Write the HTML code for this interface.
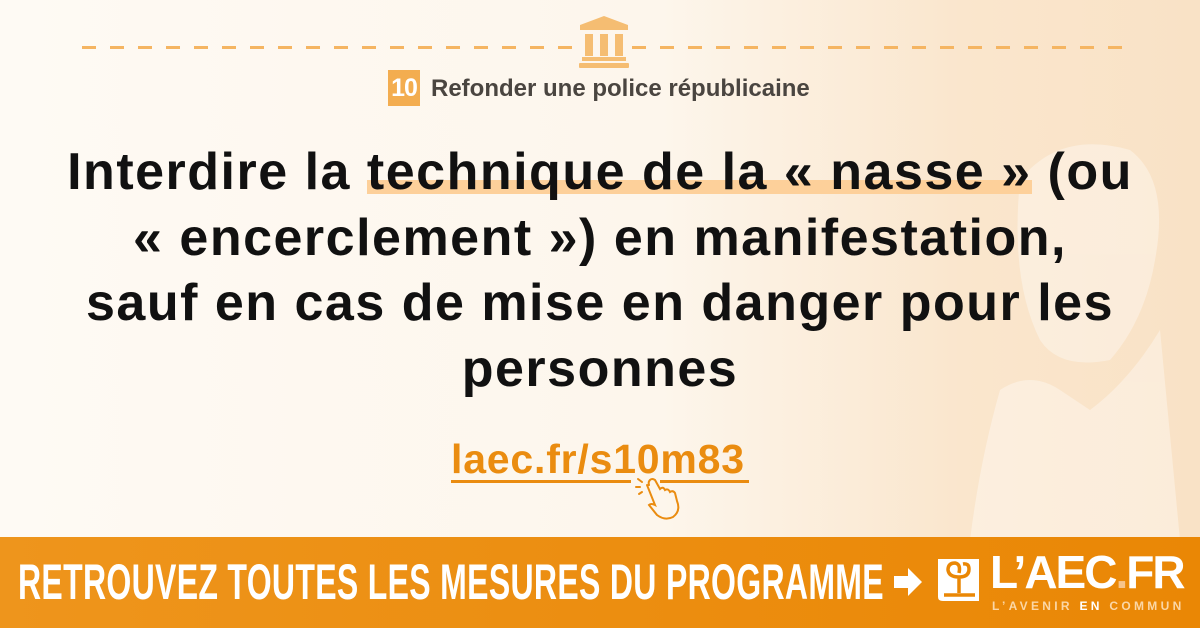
<!DOCTYPE html>
<html><head><meta charset="utf-8"><style>
*{margin:0;padding:0;box-sizing:border-box}
body{width:1200px;height:628px;overflow:hidden;position:relative;font-family:"Liberation Sans",sans-serif;background:linear-gradient(90deg,#fefaf4 0%,#fdf6ec 55%,#fae6cd 80%,#f9e2c6 100%)}
.dash{position:absolute;top:46px;height:3px;background:repeating-linear-gradient(90deg,#f5b562 0 14px,transparent 14px 28px)}
.h{position:absolute;left:0;width:1200px;text-align:center;font-weight:bold;font-size:52px;letter-spacing:1.5px;color:#111;white-space:nowrap;line-height:65px}
.hl{background:linear-gradient(transparent 64%,#fdd09a 64%,#fdd09a 88%,transparent 88%)}
.banner{position:absolute;left:0;top:537px;width:1200px;height:91px;background:linear-gradient(90deg,#ee951c,#ea8705)}
.bt{position:absolute;left:18px;top:17px;color:#fff;font-weight:bold;font-size:50px;line-height:56px;transform:scaleX(0.64);transform-origin:left;white-space:nowrap;letter-spacing:0.5px}
</style></head><body>
<svg style="position:absolute;left:940px;top:60px" width="260" height="480" viewBox="0 0 260 480"><g fill="#fff" opacity="0.35">
<path d="M80 120 Q120 70 190 90 Q230 120 215 200 Q205 260 170 300 Q120 310 100 280 Q70 220 80 120Z"/>
<path d="M60 330 Q90 310 120 330 L150 350 Q190 320 220 270 L240 480 L30 480 Q40 400 60 330Z"/>
</g></svg>
<div class="dash" style="left:82px;width:490px"></div>
<div class="dash" style="left:632px;width:490px"></div>
<svg style="position:absolute;left:575px;top:15px" width="58" height="54" viewBox="0 0 58 54"><g fill="#f5bd72">
<path d="M29 1 L53 10 L53 15 L5 15 L5 10Z"/><rect x="10" y="19" width="8" height="22"/><rect x="25" y="19" width="8" height="22"/><rect x="40" y="19" width="8" height="22"/><rect x="7" y="42" width="44" height="4"/><rect x="4" y="48" width="50" height="5" rx="1"/></g></svg>
<div style="position:absolute;left:388px;top:70px;width:32px;height:36px;background:#f3ad50;color:#fff;font-weight:bold;font-size:25px;text-align:center;line-height:36px;letter-spacing:-1px">10</div>
<div style="position:absolute;left:431px;top:75px;font-size:24px;font-weight:bold;color:#4a4540">Refonder une police républicaine</div>
<div class="h" style="top:140px">Interdire la <span class="hl">technique de la « nasse »</span> (ou</div>
<div class="h" style="top:206px">« encerclement ») en manifestation,</div>
<div class="h" style="top:271px">sauf en cas de mise en danger pour les</div>
<div class="h" style="top:337px">personnes</div>
<div style="position:absolute;left:451px;top:436px;font-size:41px;letter-spacing:0.8px;font-weight:bold;color:#ea8c10">laec.fr/s10m83</div>
<div style="position:absolute;left:451px;top:480px;width:180px;height:3px;background:#ea8c10"></div>
<div style="position:absolute;left:660px;top:480px;width:89px;height:3px;background:#ea8c10"></div>
<svg style="position:absolute;left:635px;top:477px" width="50" height="45" viewBox="0 0 50 45" fill="none" stroke="#ea8c10" stroke-width="2" stroke-linecap="round"><path d="M12 8 L20 28 Q16 26 14 28 L22 38 Q30 44 38 40 Q46 34 42 24 L40 16 Q38 13 35 15 Q33 11 30 13 Q28 9 25 12 L20 3 Q17 1 15 3 Q13 5 14 8"/><path d="M3 2 L7 5 M1 10 L5 10 M4 17 L7 15"/></svg>
<div class="banner"><div class="bt">RETROUVEZ TOUTES LES MESURES DU PROGRAMME</div>
<svg style="position:absolute;left:894px;top:29px" width="30" height="32" viewBox="0 0 30 32"><path d="M0 10 H14 V2 L28 16 L14 30 V22 H0Z" fill="#fff"/></svg>
<svg style="position:absolute;left:935px;top:18px" width="48" height="50" viewBox="0 0 48 50" fill="none" stroke="#fff" stroke-width="3.5"><path d="M4 4 H44 V46 H8 Q3 46 3 42 V4Z" fill="#fff" stroke="none"/><path d="M24 38 V22 Q14 22 13 15 Q13 8 20 8 Q26 9 24 18 M24 22 Q34 22 34 14 Q34 8 28 9" stroke="#ea8705"/><path d="M9 40 H40" stroke="#ea8705"/></svg>
<div style="position:absolute;left:990px;top:10px;color:#fff;font-weight:bold;font-size:46px;letter-spacing:-2px;line-height:50px">L’AEC<span style="color:#f7c489">.</span>FR</div>
<div style="position:absolute;left:992px;top:62px;color:#fbd7a6;font-weight:bold;font-size:12px;letter-spacing:3.3px">L’AVENIR <span style="color:#fff">EN</span> COMMUN</div>
</div>
</body></html>
